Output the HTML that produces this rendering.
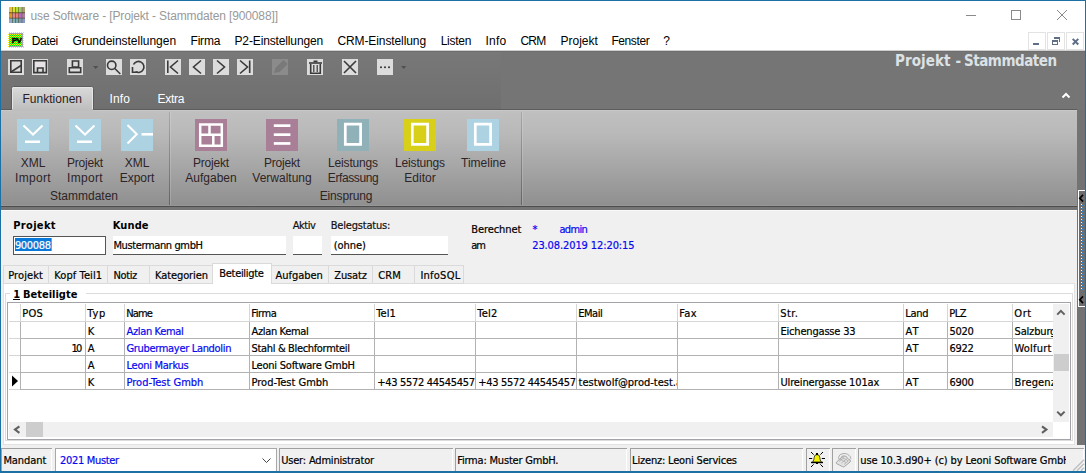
<!DOCTYPE html>
<html lang="de"><head><meta charset="utf-8"><title>use Software - [Projekt - Stammdaten [900088]]</title>
<style>
html,body{margin:0;padding:0;background:#fff;overflow:hidden}
body{width:1086px;height:473px;position:relative}
svg{display:block;position:absolute;left:0;top:0}
text{white-space:pre}
.s{font-family:"Liberation Sans",sans-serif}
.t{font-family:"DejaVu Sans Condensed","DejaVu Sans","Liberation Sans",sans-serif}
</style></head><body>
<svg width="1086" height="473" viewBox="0 0 1086 473" shape-rendering="crispEdges">
<rect x="0" y="0" width="1086" height="473" fill="#ffffff" />
<rect x="9" y="7" width="16" height="16" fill="#4a3c22" />
<rect x="9" y="7" width="3" height="5.4" fill="#e8c040" shape-rendering="auto"/>
<rect x="12.5" y="7" width="2.8" height="5.4" fill="#e0e020" shape-rendering="auto"/>
<rect x="15.8" y="7" width="2.7" height="5.4" fill="#b0e030" shape-rendering="auto"/>
<rect x="19" y="7" width="2.8" height="5.4" fill="#a0c880" shape-rendering="auto"/>
<rect x="22.2" y="7" width="2.8" height="5.4" fill="#a8a070" shape-rendering="auto"/>
<rect x="9" y="13.2" width="3" height="4.6" fill="#e09820" shape-rendering="auto"/>
<rect x="12.5" y="13.2" width="2.8" height="4.6" fill="#e08888" shape-rendering="auto"/>
<rect x="15.8" y="13.2" width="2.7" height="4.6" fill="#e88078" shape-rendering="auto"/>
<rect x="19" y="13.2" width="2.8" height="4.6" fill="#b868c8" shape-rendering="auto"/>
<rect x="22.2" y="13.2" width="2.8" height="4.6" fill="#b080a0" shape-rendering="auto"/>
<rect x="9" y="18.4" width="3" height="4.6" fill="#90a8d0" shape-rendering="auto"/>
<rect x="12.5" y="18.4" width="2.8" height="4.6" fill="#80b0b8" shape-rendering="auto"/>
<rect x="15.8" y="18.4" width="2.7" height="4.6" fill="#78a8b0" shape-rendering="auto"/>
<rect x="19" y="18.4" width="2.8" height="4.6" fill="#8098b0" shape-rendering="auto"/>
<rect x="22.2" y="18.4" width="2.8" height="4.6" fill="#8898c8" shape-rendering="auto"/>
<text class="s" x="30.5" y="19.5" font-size="12" fill="#999999" letter-spacing="-0.133">use Software - [Projekt - Stammdaten [900088]]</text>
<rect x="966" y="15" width="10" height="1" fill="#8a8a8a" />
<rect x="1011.5" y="10.5" width="9" height="9" fill="none" stroke="#8a8a8a" stroke-width="1"/>
<path d="M1057 10 L1067 20 M1067 10 L1057 20" stroke="#8a8a8a" stroke-width="1" fill="none" shape-rendering="auto"/>
<defs><pattern id="ck" x="0" y="0" width="2" height="2" patternUnits="userSpaceOnUse"><rect width="2" height="2" fill="#00f000"/><rect width="1" height="1" fill="#f4f400"/><rect x="1" y="1" width="1" height="1" fill="#f4f400"/></pattern></defs>
<rect x="8.5" y="32.5" width="15" height="15" fill="none" stroke="#f4f000" stroke-width="1" stroke-dasharray="1 1"/>
<rect x="9" y="33" width="14" height="14" fill="#a4a4ac" />
<rect x="10" y="34" width="12" height="12" fill="url(#ck)" />
<text class="s" x="11.8" y="42.8" font-size="8" fill="#000" font-weight="bold" stroke="#000" stroke-width="0.5">P</text>
<text class="s" x="16.6" y="42.8" font-size="8" fill="#000" font-weight="bold" stroke="#000" stroke-width="0.5">V</text>
<text class="s" x="31.8" y="44.5" font-size="12" fill="#000" letter-spacing="-0.429">Datei</text>
<text class="s" x="72.4" y="44.5" font-size="12" fill="#000" letter-spacing="-0.022">Grundeinstellungen</text>
<text class="s" x="190.5" y="44.5" font-size="12" fill="#000" letter-spacing="-0.193">Firma</text>
<text class="s" x="234.5" y="44.5" font-size="12" fill="#000" letter-spacing="-0.136">P2-Einstellungen</text>
<text class="s" x="337.4" y="44.5" font-size="12" fill="#000" letter-spacing="-0.095">CRM-Einstellung</text>
<text class="s" x="440.7" y="44.5" font-size="12" fill="#000" letter-spacing="-0.266">Listen</text>
<text class="s" x="485.5" y="44.5" font-size="12" fill="#000" letter-spacing="0.195">Info</text>
<text class="s" x="520.4" y="44.5" font-size="12" fill="#000" letter-spacing="-0.764">CRM</text>
<text class="s" x="560.6" y="44.5" font-size="12" fill="#000" letter-spacing="-0.027">Projekt</text>
<text class="s" x="611.4" y="44.5" font-size="12" fill="#000" letter-spacing="-0.398">Fenster</text>
<text class="s" x="663.2" y="44.5" font-size="12" fill="#000">?</text>
<rect x="1028.5" y="32.5" width="17" height="17" fill="#fff" stroke="#e3e3e3" stroke-width="1"/>
<rect x="1047.5" y="32.5" width="17" height="17" fill="#fff" stroke="#e3e3e3" stroke-width="1"/>
<rect x="1066.5" y="32.5" width="17" height="17" fill="#fff" stroke="#e3e3e3" stroke-width="1"/>
<rect x="1033" y="43" width="6" height="2" fill="#5f6f87" />
<rect x="1054" y="37" width="6" height="2" fill="#5f6f87" />
<rect x="1059" y="39" width="1" height="3" fill="#5f6f87" />
<rect x="1052" y="40" width="6" height="2" fill="#5f6f87" />
<rect x="1052" y="42" width="1" height="3" fill="#5f6f87" />
<rect x="1057" y="42" width="1" height="3" fill="#5f6f87" />
<rect x="1052" y="44" width="6" height="1" fill="#5f6f87" />
<path d="M1072.7 38.9 l5.6 5.6 M1078.3 38.9 l-5.6 5.6" stroke="#5f6f87" stroke-width="2" fill="none" shape-rendering="auto"/>
<rect x="1" y="51" width="1084" height="59" fill="#757575" />
<rect x="1" y="50" width="1084" height="1" fill="#cfcfcf" />
<defs><linearGradient id="gq" x1="0" y1="0" x2="0" y2="1"><stop offset="0" stop-color="#787878"/><stop offset="1" stop-color="#6f6f6f"/></linearGradient></defs>
<rect x="1" y="51" width="500" height="58" fill="url(#gq)" />
<rect x="1" y="51" width="1084" height="1" fill="#6e6e6e" />
<rect x="8" y="59" width="16" height="16" fill="#dcdcdc" />
<rect x="32" y="59" width="16" height="16" fill="#dcdcdc" />
<rect x="67" y="59" width="16" height="16" fill="#dcdcdc" />
<rect x="106" y="59" width="16" height="16" fill="#dcdcdc" />
<rect x="130" y="59" width="16" height="16" fill="#dcdcdc" />
<rect x="165" y="59" width="16" height="16" fill="#dcdcdc" />
<rect x="189" y="59" width="16" height="16" fill="#dcdcdc" />
<rect x="213" y="59" width="16" height="16" fill="#dcdcdc" />
<rect x="237" y="59" width="16" height="16" fill="#dcdcdc" />
<rect x="272" y="59" width="16" height="16" fill="#8b8b8b" />
<rect x="307" y="59" width="16" height="16" fill="#dcdcdc" />
<rect x="342" y="59" width="16" height="16" fill="#dcdcdc" />
<rect x="377" y="59" width="16" height="16" fill="#dcdcdc" />
<path d="M10.8 60.8 h10.4 v11.4 h-10.4 z" stroke="#3a3a3a" stroke-width="1.6" fill="none" shape-rendering="auto" />
<path d="M11 72 L21 65.5" stroke="#3a3a3a" stroke-width="1.6" fill="none" shape-rendering="auto" />
<path d="M33.8 60.8 h12.6 v11.8 h-12.6 z" stroke="#3a3a3a" stroke-width="1.6" fill="none" shape-rendering="auto" />
<rect x="35" y="62" width="10" height="5" fill="#e6e2e6" />
<path d="M37.5 73 v-5 h5.5 v5" stroke="#3a3a3a" stroke-width="1.6" fill="none" shape-rendering="auto" />
<path d="M72.4 61 h6.2 v6 h-6.2 z" stroke="#3a3a3a" stroke-width="1.6" fill="none" shape-rendering="auto" />
<path d="M69.3 67.8 h11.4 v4.6 h-11.4 z" stroke="#3a3a3a" stroke-width="1.6" fill="none" shape-rendering="auto" />
<path d="M93 66 h5.4 l-2.7 3 z" stroke="none" stroke-width="0" fill="#505050" shape-rendering="auto" />
<circle cx="111.7" cy="65.3" r="4.2" stroke="#3a3a3a" stroke-width="1.6" fill="none" shape-rendering="auto"/>
<path d="M114.8 68.5 L120.3 74" stroke="#3a3a3a" stroke-width="1.6" fill="none" shape-rendering="auto" />
<path d="M133.5 64.5 A5.5 5.5 0 1 1 135.5 71.6" stroke="#3a3a3a" stroke-width="1.6" fill="none" shape-rendering="auto" />
<path d="M132.5 67 V72.3 H138" stroke="#3a3a3a" stroke-width="1.6" fill="none" shape-rendering="auto" />
<path d="M167.8 60.5 v12.5" stroke="#3a3a3a" stroke-width="1.6" fill="none" shape-rendering="auto" />
<path d="M178 60.5 l-7.5 6.5 l7.5 6.5" stroke="#3a3a3a" stroke-width="1.6" fill="none" shape-rendering="auto" />
<path d="M201 60.5 l-7.5 6.5 l7.5 6.5" stroke="#3a3a3a" stroke-width="1.6" fill="none" shape-rendering="auto" />
<path d="M217 60.5 l7.5 6.5 l-7.5 6.5" stroke="#3a3a3a" stroke-width="1.6" fill="none" shape-rendering="auto" />
<path d="M240 60.5 l7.5 6.5 l-7.5 6.5" stroke="#3a3a3a" stroke-width="1.6" fill="none" shape-rendering="auto" />
<path d="M249.7 60.5 v12.5" stroke="#3a3a3a" stroke-width="1.6" fill="none" shape-rendering="auto" />
<path d="M274 73 l1.5 -5 l8 -8 l4 4 l-8 8 z" stroke="none" stroke-width="0" fill="#797979" shape-rendering="auto" />
<path d="M309 63 h13" stroke="#3a3a3a" stroke-width="1.6" fill="none" shape-rendering="auto" />
<path d="M313.5 61.3 h4" stroke="#3a3a3a" stroke-width="1.6" fill="none" shape-rendering="auto" />
<path d="M310.7 64 v9.3 h9.6 v-9.3" stroke="#3a3a3a" stroke-width="1.6" fill="none" shape-rendering="auto" />
<path d="M313.8 65 v7 M317.2 65 v7" stroke="#3a3a3a" stroke-width="1.2" fill="none" shape-rendering="auto" />
<path d="M344 61 l12 12 M356 61 l-12 12" stroke="#3a3a3a" stroke-width="1.6" fill="none" shape-rendering="auto" />
<circle cx="381" cy="67.2" r="1.05" fill="#3a3a3a" shape-rendering="auto"/>
<circle cx="385" cy="67.2" r="1.05" fill="#3a3a3a" shape-rendering="auto"/>
<circle cx="389" cy="67.2" r="1.05" fill="#3a3a3a" shape-rendering="auto"/>
<path d="M401 66 h5.4 l-2.7 3 z" stroke="none" stroke-width="0" fill="#505050" shape-rendering="auto" />
<text class="t" x="895.0" y="65.5" font-size="15" fill="#dce1e4" font-weight="bold" letter-spacing="0.078">Projekt</text>
<text class="t" x="955.6" y="65.5" font-size="15" fill="#dce1e4" font-weight="bold">-</text>
<text class="t" x="963.9" y="65.5" font-size="15" fill="#dce1e4" font-weight="bold" letter-spacing="-0.455">Stammdaten</text>
<path d="M1062.5 97.5 l3.5 -3.5 l3.5 3.5" stroke="#fff" stroke-width="2" fill="none" shape-rendering="auto" />
<defs><linearGradient id="gt" x1="0" y1="0" x2="0" y2="1"><stop offset="0" stop-color="#dadada"/><stop offset="1" stop-color="#bebebe"/></linearGradient><linearGradient id="gr" x1="0" y1="0" x2="0" y2="1"><stop offset="0" stop-color="#c0c0c0"/><stop offset="0.25" stop-color="#b9b9b9"/><stop offset="1" stop-color="#8f8f8f"/></linearGradient></defs>
<rect x="1" y="109" width="1076" height="1" fill="#5c5c5c" />
<rect x="1" y="110" width="1076" height="96" fill="url(#gr)" />
<rect x="1" y="110" width="1076" height="1" fill="#c8c8c8" />
<rect x="1" y="205" width="1076" height="1" fill="#979797" />
<rect x="1" y="206" width="1076" height="1" fill="#4d4d4d" />
<rect x="1" y="207" width="1076" height="3" fill="#757575" />
<path d="M11.5 110 V88.5 a2 2 0 0 1 2 -2 H91.5 a2 2 0 0 1 2 2 V110" fill="url(#gt)" stroke="#5c5c5c" stroke-width="1" shape-rendering="auto"/>
<path d="M12.5 110 V88.5 a1 1 0 0 1 1 -1 H91.5 a1 1 0 0 1 1 1 V110" fill="none" stroke="#e6e6e6" stroke-width="1" shape-rendering="auto"/>
<rect x="12" y="109" width="81" height="2" fill="#bebebe" />
<text class="s" x="22.5" y="102.5" font-size="12" fill="#2a2022" letter-spacing="0.014">Funktionen</text>
<text class="s" x="109.5" y="102.5" font-size="12" fill="#fff" letter-spacing="0.095">Info</text>
<text class="s" x="157.4" y="102.5" font-size="12" fill="#fff" letter-spacing="-0.254">Extra</text>
<defs><linearGradient id="gs" x1="0" y1="0" x2="0" y2="1"><stop offset="0" stop-color="#a8a8a8"/><stop offset="1" stop-color="#646464"/></linearGradient></defs>
<rect x="169" y="112" width="1" height="93" fill="url(#gs)" />
<rect x="170" y="112" width="1" height="93" fill="#ffffff" fill-opacity="0.16"/>
<rect x="521" y="112" width="1" height="93" fill="url(#gs)" />
<rect x="522" y="112" width="1" height="93" fill="#ffffff" fill-opacity="0.16"/>
<rect x="17" y="119" width="32" height="32" fill="#add2e2" />
<path d="M23.5 125.5 l9.5 9 l9.5 -9" stroke="#fff" stroke-width="2.1" fill="none" shape-rendering="auto" />
<rect x="25" y="140.5" width="15" height="2.5" fill="#fff" shape-rendering="auto"/>
<rect x="69" y="119" width="32" height="32" fill="#add2e2" />
<path d="M75.5 125.5 l9.5 9 l9.5 -9" stroke="#fff" stroke-width="2.1" fill="none" shape-rendering="auto" />
<rect x="77" y="140.5" width="15" height="2.5" fill="#fff" shape-rendering="auto"/>
<rect x="121" y="119" width="32" height="32" fill="#add2e2" />
<path d="M127.5 125 l9.3 9.3 l-9.3 9.3" stroke="#fff" stroke-width="2.1" fill="none" shape-rendering="auto" />
<rect x="141.5" y="133" width="11.5" height="2.6" fill="#fff" shape-rendering="auto"/>
<rect x="195" y="119" width="32" height="32" fill="#a87f97" />
<path d="M200.2 124.4 h21.6 v21.4 h-21.6 z M209.5 124.4 v10.4 M213.3 134.8 v11 M200.2 134.8 h21.6" stroke="#fff" stroke-width="2.5" fill="none" shape-rendering="auto" />
<rect x="266" y="119" width="32" height="32" fill="#a87f97" />
<rect x="273.8" y="124.3" width="16.6" height="2.7" fill="#fff" shape-rendering="auto"/>
<rect x="273.8" y="133.3" width="16.6" height="2.7" fill="#fff" shape-rendering="auto"/>
<rect x="273.8" y="142.1" width="16.6" height="2.7" fill="#fff" shape-rendering="auto"/>
<rect x="337" y="119" width="32" height="32" fill="#91b1b9" />
<path d="M345.3 124.2 h15.3 v20.2 h-15.3 z" stroke="#fff" stroke-width="2.7" fill="none" shape-rendering="auto" />
<rect x="404" y="119" width="32" height="32" fill="#d8d018" />
<path d="M412.3 124.2 h15.3 v20.2 h-15.3 z" stroke="#fff" stroke-width="2.7" fill="none" shape-rendering="auto" />
<rect x="467" y="119" width="32" height="32" fill="#add2e2" />
<path d="M475.3 124.2 h15.3 v20.2 h-15.3 z" stroke="#fff" stroke-width="2.7" fill="none" shape-rendering="auto" />
<text class="s" x="33" y="166.5" font-size="12" fill="#2e2426" text-anchor="middle">XML</text>
<text class="s" x="33" y="181.5" font-size="12" fill="#2e2426" text-anchor="middle" letter-spacing="0.297">Import</text>
<text class="s" x="85" y="166.5" font-size="12" fill="#2e2426" text-anchor="middle" letter-spacing="-0.193">Projekt</text>
<text class="s" x="85" y="181.5" font-size="12" fill="#2e2426" text-anchor="middle" letter-spacing="0.297">Import</text>
<text class="s" x="137" y="166.5" font-size="12" fill="#2e2426" text-anchor="middle">XML</text>
<text class="s" x="137" y="181.5" font-size="12" fill="#2e2426" text-anchor="middle">Export</text>
<text class="s" x="211" y="166.5" font-size="12" fill="#2e2426" text-anchor="middle" letter-spacing="-0.193">Projekt</text>
<text class="s" x="211" y="181.5" font-size="12" fill="#2e2426" text-anchor="middle">Aufgaben</text>
<text class="s" x="282" y="166.5" font-size="12" fill="#2e2426" text-anchor="middle" letter-spacing="-0.193">Projekt</text>
<text class="s" x="282" y="181.5" font-size="12" fill="#2e2426" text-anchor="middle">Verwaltung</text>
<text class="s" x="353" y="166.5" font-size="12" fill="#2e2426" text-anchor="middle" letter-spacing="-0.172">Leistungs</text>
<text class="s" x="353" y="181.5" font-size="12" fill="#2e2426" text-anchor="middle" letter-spacing="-0.404">Erfassung</text>
<text class="s" x="420" y="166.5" font-size="12" fill="#2e2426" text-anchor="middle" letter-spacing="-0.172">Leistungs</text>
<text class="s" x="420" y="181.5" font-size="12" fill="#2e2426" text-anchor="middle">Editor</text>
<text class="s" x="483.5" y="166.5" font-size="12" fill="#2e2426" text-anchor="middle">Timeline</text>
<text class="s" x="84" y="199.5" font-size="12" fill="#2e2426" text-anchor="middle">Stammdaten</text>
<text class="s" x="346" y="199.5" font-size="12" fill="#2e2426" text-anchor="middle" letter-spacing="-0.156">Einsprung</text>
<rect x="1077" y="109" width="8" height="336" fill="#737373" />
<rect x="1078" y="190" width="7" height="117" fill="#fff" />
<rect x="1079" y="191" width="6" height="115" fill="#6e6e6e" />
<path d="M1083 194.8 l-3.2 3.4 l3.2 3.4" stroke="#000" stroke-width="1.7" fill="none" shape-rendering="auto" />
<path d="M1083 296.3 l-3.2 3.4 l3.2 3.4" stroke="#000" stroke-width="1.7" fill="none" shape-rendering="auto" />
<rect x="1081" y="204" width="1" height="1" fill="#fff" />
<rect x="1082" y="205" width="1" height="1" fill="#2a8ae8" />
<rect x="1081" y="207" width="1" height="1" fill="#fff" />
<rect x="1082" y="208" width="1" height="1" fill="#2a8ae8" />
<rect x="1081" y="210" width="1" height="1" fill="#fff" />
<rect x="1082" y="211" width="1" height="1" fill="#2a8ae8" />
<rect x="1081" y="213" width="1" height="1" fill="#fff" />
<rect x="1082" y="214" width="1" height="1" fill="#2a8ae8" />
<rect x="1081" y="216" width="1" height="1" fill="#fff" />
<rect x="1082" y="217" width="1" height="1" fill="#2a8ae8" />
<rect x="1081" y="219" width="1" height="1" fill="#fff" />
<rect x="1082" y="220" width="1" height="1" fill="#2a8ae8" />
<rect x="1081" y="222" width="1" height="1" fill="#fff" />
<rect x="1082" y="223" width="1" height="1" fill="#2a8ae8" />
<rect x="1081" y="225" width="1" height="1" fill="#fff" />
<rect x="1082" y="226" width="1" height="1" fill="#2a8ae8" />
<rect x="1081" y="228" width="1" height="1" fill="#fff" />
<rect x="1082" y="229" width="1" height="1" fill="#2a8ae8" />
<rect x="1081" y="231" width="1" height="1" fill="#fff" />
<rect x="1082" y="232" width="1" height="1" fill="#2a8ae8" />
<rect x="1081" y="234" width="1" height="1" fill="#fff" />
<rect x="1082" y="235" width="1" height="1" fill="#2a8ae8" />
<rect x="1081" y="237" width="1" height="1" fill="#fff" />
<rect x="1082" y="238" width="1" height="1" fill="#2a8ae8" />
<rect x="1081" y="240" width="1" height="1" fill="#fff" />
<rect x="1082" y="241" width="1" height="1" fill="#2a8ae8" />
<rect x="1081" y="243" width="1" height="1" fill="#fff" />
<rect x="1082" y="244" width="1" height="1" fill="#2a8ae8" />
<rect x="1081" y="246" width="1" height="1" fill="#fff" />
<rect x="1082" y="247" width="1" height="1" fill="#2a8ae8" />
<rect x="1081" y="249" width="1" height="1" fill="#fff" />
<rect x="1082" y="250" width="1" height="1" fill="#2a8ae8" />
<rect x="1081" y="252" width="1" height="1" fill="#fff" />
<rect x="1082" y="253" width="1" height="1" fill="#2a8ae8" />
<rect x="1081" y="255" width="1" height="1" fill="#fff" />
<rect x="1082" y="256" width="1" height="1" fill="#2a8ae8" />
<rect x="1081" y="258" width="1" height="1" fill="#fff" />
<rect x="1082" y="259" width="1" height="1" fill="#2a8ae8" />
<rect x="1081" y="261" width="1" height="1" fill="#fff" />
<rect x="1082" y="262" width="1" height="1" fill="#2a8ae8" />
<rect x="1081" y="264" width="1" height="1" fill="#fff" />
<rect x="1082" y="265" width="1" height="1" fill="#2a8ae8" />
<rect x="1081" y="267" width="1" height="1" fill="#fff" />
<rect x="1082" y="268" width="1" height="1" fill="#2a8ae8" />
<rect x="1081" y="270" width="1" height="1" fill="#fff" />
<rect x="1082" y="271" width="1" height="1" fill="#2a8ae8" />
<rect x="1081" y="273" width="1" height="1" fill="#fff" />
<rect x="1082" y="274" width="1" height="1" fill="#2a8ae8" />
<rect x="1081" y="276" width="1" height="1" fill="#fff" />
<rect x="1082" y="277" width="1" height="1" fill="#2a8ae8" />
<rect x="1081" y="279" width="1" height="1" fill="#fff" />
<rect x="1082" y="280" width="1" height="1" fill="#2a8ae8" />
<rect x="1081" y="282" width="1" height="1" fill="#fff" />
<rect x="1082" y="283" width="1" height="1" fill="#2a8ae8" />
<rect x="1081" y="285" width="1" height="1" fill="#fff" />
<rect x="1082" y="286" width="1" height="1" fill="#2a8ae8" />
<rect x="1081" y="288" width="1" height="1" fill="#fff" />
<rect x="1082" y="289" width="1" height="1" fill="#2a8ae8" />
<rect x="1" y="210" width="1076" height="235" fill="#f0f0f0" />
<rect x="1" y="210" width="1076" height="1" fill="#f9f9f9" />
<text class="t" x="13.2" y="228.5" font-size="11" fill="#000" font-weight="bold" letter-spacing="0.340">Projekt</text>
<text class="t" x="112.7" y="228.5" font-size="11" fill="#000" font-weight="bold" letter-spacing="0.131">Kunde</text>
<text class="t" x="292.7" y="229" font-size="11" fill="#111" letter-spacing="-0.471" stroke="#111" stroke-width="0.2">Aktiv</text>
<text class="t" x="330.7" y="229" font-size="11" fill="#111" letter-spacing="-0.186" stroke="#111" stroke-width="0.2">Belegstatus:</text>
<rect x="13" y="236" width="93" height="19" fill="#555" />
<rect x="14" y="237" width="91" height="17" fill="#fff" />
<rect x="15" y="238" width="36" height="13" fill="#0a78d8" />
<rect x="51" y="238" width="1" height="13" fill="#f08020" />
<text class="t" x="14.9" y="248.5" font-size="11" fill="#fff" letter-spacing="-0.316" stroke="#fff" stroke-width="0.2">900088</text>
<rect x="113" y="236" width="173" height="18" fill="#fff" />
<rect x="113" y="254" width="173" height="1" fill="#555" />
<rect x="293" y="236" width="29" height="18" fill="#fff" />
<rect x="293" y="254" width="29" height="1" fill="#555" />
<rect x="331" y="236" width="117" height="18" fill="#fff" />
<rect x="331" y="254" width="117" height="1" fill="#555" />
<text class="t" x="113.4" y="248.5" font-size="11" fill="#000" letter-spacing="-0.376" stroke="#000" stroke-width="0.2">Mustermann gmbH</text>
<text class="t" x="333.7" y="248.5" font-size="11" fill="#000" letter-spacing="-0.044" stroke="#000" stroke-width="0.2">(ohne)</text>
<text class="t" x="471.2" y="233" font-size="11" fill="#000" letter-spacing="-0.083" stroke="#000" stroke-width="0.2">Berechnet</text>
<text class="t" x="471.2" y="248.5" font-size="11" fill="#000" letter-spacing="-1.019" stroke="#000" stroke-width="0.2">am</text>
<text class="t" x="532.5" y="233" font-size="11" fill="#0808f0" stroke="#0808f0" stroke-width="0.2">*</text>
<text class="t" x="559.4" y="233" font-size="11" fill="#0808f0" letter-spacing="-0.654" stroke="#0808f0" stroke-width="0.2">admin</text>
<text class="t" x="532.2" y="248.5" font-size="11" fill="#0808f0" letter-spacing="-0.102" stroke="#0808f0" stroke-width="0.2">23.08.2019 12:20:15</text>
<rect x="3" y="283" width="1072" height="162" fill="#e2e2e2" />
<rect x="4" y="284" width="1070" height="160" fill="#fff" />
<rect x="3" y="265" width="46" height="19" fill="#dadada" />
<rect x="4" y="266" width="44" height="17" fill="#f0f0f0" />
<text class="t" x="8.2" y="279" font-size="11" fill="#000" letter-spacing="0.098" stroke="#000" stroke-width="0.2">Projekt</text>
<rect x="48" y="265" width="60" height="19" fill="#dadada" />
<rect x="49" y="266" width="58" height="17" fill="#f0f0f0" />
<text class="t" x="54.2" y="279" font-size="11" fill="#000" letter-spacing="0.103" stroke="#000" stroke-width="0.2">Kopf Teil1</text>
<rect x="107" y="265" width="43" height="19" fill="#dadada" />
<rect x="108" y="266" width="41" height="17" fill="#f0f0f0" />
<text class="t" x="113.4" y="279" font-size="11" fill="#000" letter-spacing="-0.345" stroke="#000" stroke-width="0.2">Notiz</text>
<rect x="149" y="265" width="64" height="19" fill="#dadada" />
<rect x="150" y="266" width="62" height="17" fill="#f0f0f0" />
<text class="t" x="155.0" y="279" font-size="11" fill="#000" letter-spacing="-0.095" stroke="#000" stroke-width="0.2">Kategorien</text>
<rect x="271" y="265" width="58" height="19" fill="#dadada" />
<rect x="272" y="266" width="56" height="17" fill="#f0f0f0" />
<text class="t" x="275.5" y="279" font-size="11" fill="#000" letter-spacing="-0.033" stroke="#000" stroke-width="0.2">Aufgaben</text>
<rect x="328" y="265" width="45" height="19" fill="#dadada" />
<rect x="329" y="266" width="43" height="17" fill="#f0f0f0" />
<text class="t" x="334.3" y="279" font-size="11" fill="#000" letter-spacing="-0.129" stroke="#000" stroke-width="0.2">Zusatz</text>
<rect x="372" y="265" width="43" height="19" fill="#dadada" />
<rect x="373" y="266" width="41" height="17" fill="#f0f0f0" />
<text class="t" x="378.2" y="279" font-size="11" fill="#000" letter-spacing="0.136" stroke="#000" stroke-width="0.2">CRM</text>
<rect x="414" y="265" width="50" height="19" fill="#dadada" />
<rect x="415" y="266" width="48" height="17" fill="#f0f0f0" />
<text class="t" x="420.4" y="279" font-size="11" fill="#000" letter-spacing="0.248" stroke="#000" stroke-width="0.2">InfoSQL</text>
<rect x="212" y="263" width="60" height="21" fill="#dadada" />
<rect x="213" y="264" width="58" height="21" fill="#fff" />
<text class="t" x="219.3" y="276.7" font-size="11" fill="#000" letter-spacing="-0.307" stroke="#000" stroke-width="0.2">Beteiligte</text>
<rect x="5" y="293" width="1068" height="148" fill="#dcdcdc" />
<rect x="6" y="294" width="1066" height="146" fill="#fff" />
<rect x="10" y="290" width="76" height="8" fill="#fff" />
<text class="t" x="13.3" y="297.5" font-size="11" fill="#000" font-weight="bold">1</text>
<rect x="13" y="299" width="7" height="1" fill="#000" />
<text class="t" x="23" y="297.5" font-size="11" fill="#000" font-weight="bold">Beteiligte</text>
<rect x="7" y="302" width="1064" height="138" fill="#a3a3a8" />
<rect x="8" y="303" width="1062" height="136" fill="#fff" />
<rect x="9" y="321" width="1044" height="1" fill="#d6d6d6" />
<rect x="20" y="304" width="1" height="18" fill="#d6d6d6" />
<rect x="85" y="304" width="1" height="18" fill="#d6d6d6" />
<rect x="124" y="304" width="1" height="18" fill="#d6d6d6" />
<rect x="249" y="304" width="1" height="18" fill="#d6d6d6" />
<rect x="374" y="304" width="1" height="18" fill="#d6d6d6" />
<rect x="475" y="304" width="1" height="18" fill="#d6d6d6" />
<rect x="576" y="304" width="1" height="18" fill="#d6d6d6" />
<rect x="677" y="304" width="1" height="18" fill="#d6d6d6" />
<rect x="778" y="304" width="1" height="18" fill="#d6d6d6" />
<rect x="903" y="304" width="1" height="18" fill="#d6d6d6" />
<rect x="947" y="304" width="1" height="18" fill="#d6d6d6" />
<rect x="1012" y="304" width="1" height="18" fill="#d6d6d6" />
<text class="t" x="22.3" y="316.6" font-size="11" fill="#000" letter-spacing="0.177" stroke="#000" stroke-width="0.2">POS</text>
<text class="t" x="87.3" y="316.6" font-size="11" fill="#000" letter-spacing="0.816" stroke="#000" stroke-width="0.2">Typ</text>
<text class="t" x="126.3" y="316.6" font-size="11" fill="#000" letter-spacing="-0.868" stroke="#000" stroke-width="0.2">Name</text>
<text class="t" x="251.3" y="316.6" font-size="11" fill="#000" letter-spacing="-0.409" stroke="#000" stroke-width="0.2">Firma</text>
<text class="t" x="376.3" y="316.6" font-size="11" fill="#000" letter-spacing="0.096" stroke="#000" stroke-width="0.2">Tel1</text>
<text class="t" x="477.3" y="316.6" font-size="11" fill="#000" letter-spacing="0.262" stroke="#000" stroke-width="0.2">Tel2</text>
<text class="t" x="578.3" y="316.6" font-size="11" fill="#000" letter-spacing="-0.490" stroke="#000" stroke-width="0.2">EMail</text>
<text class="t" x="679.3" y="316.6" font-size="11" fill="#000" letter-spacing="0.345" stroke="#000" stroke-width="0.2">Fax</text>
<text class="t" x="780.3" y="316.6" font-size="11" fill="#000" letter-spacing="0.442" stroke="#000" stroke-width="0.2">Str.</text>
<text class="t" x="905.3" y="316.6" font-size="11" fill="#000" letter-spacing="-0.314" stroke="#000" stroke-width="0.2">Land</text>
<text class="t" x="949.3" y="316.6" font-size="11" fill="#000" letter-spacing="-0.483" stroke="#000" stroke-width="0.2">PLZ</text>
<text class="t" x="1014.3" y="316.6" font-size="11" fill="#000" letter-spacing="0.583" stroke="#000" stroke-width="0.2">Ort</text>
<rect x="9" y="338" width="11" height="1" fill="#d6d6d6" />
<rect x="20" y="338" width="1033" height="1" fill="#b2b2b2" />
<rect x="20" y="322" width="1" height="17" fill="#b2b2b2" />
<rect x="85" y="322" width="1" height="17" fill="#b2b2b2" />
<rect x="124" y="322" width="1" height="17" fill="#b2b2b2" />
<rect x="249" y="322" width="1" height="17" fill="#b2b2b2" />
<rect x="374" y="322" width="1" height="17" fill="#b2b2b2" />
<rect x="475" y="322" width="1" height="17" fill="#b2b2b2" />
<rect x="576" y="322" width="1" height="17" fill="#b2b2b2" />
<rect x="677" y="322" width="1" height="17" fill="#b2b2b2" />
<rect x="778" y="322" width="1" height="17" fill="#b2b2b2" />
<rect x="903" y="322" width="1" height="17" fill="#b2b2b2" />
<rect x="947" y="322" width="1" height="17" fill="#b2b2b2" />
<rect x="1012" y="322" width="1" height="17" fill="#b2b2b2" />
<rect x="9" y="355" width="11" height="1" fill="#d6d6d6" />
<rect x="20" y="355" width="1033" height="1" fill="#b2b2b2" />
<rect x="20" y="339" width="1" height="17" fill="#b2b2b2" />
<rect x="85" y="339" width="1" height="17" fill="#b2b2b2" />
<rect x="124" y="339" width="1" height="17" fill="#b2b2b2" />
<rect x="249" y="339" width="1" height="17" fill="#b2b2b2" />
<rect x="374" y="339" width="1" height="17" fill="#b2b2b2" />
<rect x="475" y="339" width="1" height="17" fill="#b2b2b2" />
<rect x="576" y="339" width="1" height="17" fill="#b2b2b2" />
<rect x="677" y="339" width="1" height="17" fill="#b2b2b2" />
<rect x="778" y="339" width="1" height="17" fill="#b2b2b2" />
<rect x="903" y="339" width="1" height="17" fill="#b2b2b2" />
<rect x="947" y="339" width="1" height="17" fill="#b2b2b2" />
<rect x="1012" y="339" width="1" height="17" fill="#b2b2b2" />
<rect x="9" y="372" width="11" height="1" fill="#d6d6d6" />
<rect x="20" y="372" width="1033" height="1" fill="#b2b2b2" />
<rect x="20" y="356" width="1" height="17" fill="#b2b2b2" />
<rect x="85" y="356" width="1" height="17" fill="#b2b2b2" />
<rect x="124" y="356" width="1" height="17" fill="#b2b2b2" />
<rect x="249" y="356" width="1" height="17" fill="#b2b2b2" />
<rect x="374" y="356" width="1" height="17" fill="#b2b2b2" />
<rect x="475" y="356" width="1" height="17" fill="#b2b2b2" />
<rect x="576" y="356" width="1" height="17" fill="#b2b2b2" />
<rect x="677" y="356" width="1" height="17" fill="#b2b2b2" />
<rect x="778" y="356" width="1" height="17" fill="#b2b2b2" />
<rect x="903" y="356" width="1" height="17" fill="#b2b2b2" />
<rect x="947" y="356" width="1" height="17" fill="#b2b2b2" />
<rect x="1012" y="356" width="1" height="17" fill="#b2b2b2" />
<rect x="9" y="389" width="11" height="1" fill="#d6d6d6" />
<rect x="20" y="389" width="1033" height="1" fill="#b2b2b2" />
<rect x="20" y="373" width="1" height="17" fill="#b2b2b2" />
<rect x="85" y="373" width="1" height="17" fill="#b2b2b2" />
<rect x="124" y="373" width="1" height="17" fill="#b2b2b2" />
<rect x="249" y="373" width="1" height="17" fill="#b2b2b2" />
<rect x="374" y="373" width="1" height="17" fill="#b2b2b2" />
<rect x="475" y="373" width="1" height="17" fill="#b2b2b2" />
<rect x="576" y="373" width="1" height="17" fill="#b2b2b2" />
<rect x="677" y="373" width="1" height="17" fill="#b2b2b2" />
<rect x="778" y="373" width="1" height="17" fill="#b2b2b2" />
<rect x="903" y="373" width="1" height="17" fill="#b2b2b2" />
<rect x="947" y="373" width="1" height="17" fill="#b2b2b2" />
<rect x="1012" y="373" width="1" height="17" fill="#b2b2b2" />
<defs><clipPath id="c0"><rect x="21" y="303" width="64" height="120"/></clipPath><clipPath id="c1"><rect x="86" y="303" width="38" height="120"/></clipPath><clipPath id="c2"><rect x="125" y="303" width="124" height="120"/></clipPath><clipPath id="c3"><rect x="250" y="303" width="124" height="120"/></clipPath><clipPath id="c4"><rect x="375" y="303" width="100" height="120"/></clipPath><clipPath id="c5"><rect x="476" y="303" width="100" height="120"/></clipPath><clipPath id="c6"><rect x="577" y="303" width="100" height="120"/></clipPath><clipPath id="c7"><rect x="678" y="303" width="100" height="120"/></clipPath><clipPath id="c8"><rect x="779" y="303" width="124" height="120"/></clipPath><clipPath id="c9"><rect x="904" y="303" width="43" height="120"/></clipPath><clipPath id="c10"><rect x="948" y="303" width="64" height="120"/></clipPath><clipPath id="c11"><rect x="1013" y="303" width="40" height="120"/></clipPath></defs>
<text class="t" x="87.8" y="334.7" font-size="11" fill="#000" clip-path="url(#c1)" stroke="#000" stroke-width="0.2">K</text>
<text class="t" x="126.5" y="334.7" font-size="11" fill="#0808f0" letter-spacing="-0.349" clip-path="url(#c2)" stroke="#0808f0" stroke-width="0.2">Azlan Kemal</text>
<text class="t" x="251.5" y="334.7" font-size="11" fill="#000" letter-spacing="-0.349" clip-path="url(#c3)" stroke="#000" stroke-width="0.2">Azlan Kemal</text>
<text class="t" x="780.5" y="334.7" font-size="11" fill="#000" letter-spacing="-0.191" clip-path="url(#c8)" stroke="#000" stroke-width="0.2">Eichengasse 33</text>
<text class="t" x="905.5" y="334.7" font-size="11" fill="#000" letter-spacing="1.131" clip-path="url(#c9)" stroke="#000" stroke-width="0.2">AT</text>
<text class="t" x="949.5" y="334.7" font-size="11" fill="#000" letter-spacing="-0.263" clip-path="url(#c10)" stroke="#000" stroke-width="0.2">5020</text>
<text class="t" x="1014.5" y="334.7" font-size="11" fill="#000" letter-spacing="-0.159" clip-path="url(#c11)" stroke="#000" stroke-width="0.2">Salzburg</text>
<text class="t" x="71.5" y="351.7" font-size="11" fill="#000" letter-spacing="-1.694" stroke="#000" stroke-width="0.2">10</text>
<text class="t" x="87.8" y="351.7" font-size="11" fill="#000" clip-path="url(#c1)" stroke="#000" stroke-width="0.2">A</text>
<text class="t" x="126.5" y="351.7" font-size="11" fill="#0808f0" letter-spacing="-0.325" clip-path="url(#c2)" stroke="#0808f0" stroke-width="0.2">Grubermayer Landolin</text>
<text class="t" x="251.5" y="351.7" font-size="11" fill="#000" letter-spacing="-0.336" clip-path="url(#c3)" stroke="#000" stroke-width="0.2">Stahl &amp; Blechformteil</text>
<text class="t" x="905.5" y="351.7" font-size="11" fill="#000" letter-spacing="1.131" clip-path="url(#c9)" stroke="#000" stroke-width="0.2">AT</text>
<text class="t" x="949.5" y="351.7" font-size="11" fill="#000" letter-spacing="-0.263" clip-path="url(#c10)" stroke="#000" stroke-width="0.2">6922</text>
<text class="t" x="1014.5" y="351.7" font-size="11" fill="#000" letter-spacing="0.191" clip-path="url(#c11)" stroke="#000" stroke-width="0.2">Wolfurt</text>
<text class="t" x="87.8" y="368.7" font-size="11" fill="#000" clip-path="url(#c1)" stroke="#000" stroke-width="0.2">A</text>
<text class="t" x="126.5" y="368.7" font-size="11" fill="#0808f0" letter-spacing="-0.266" clip-path="url(#c2)" stroke="#0808f0" stroke-width="0.2">Leoni Markus</text>
<text class="t" x="251.5" y="368.7" font-size="11" fill="#000" letter-spacing="-0.222" clip-path="url(#c3)" stroke="#000" stroke-width="0.2">Leoni Software GmbH</text>
<text class="t" x="87.8" y="385.7" font-size="11" fill="#000" clip-path="url(#c1)" stroke="#000" stroke-width="0.2">K</text>
<text class="t" x="126.5" y="385.7" font-size="11" fill="#0808f0" letter-spacing="0.007" clip-path="url(#c2)" stroke="#0808f0" stroke-width="0.2">Prod-Test Gmbh</text>
<text class="t" x="251.5" y="385.7" font-size="11" fill="#000" letter-spacing="0.007" clip-path="url(#c3)" stroke="#000" stroke-width="0.2">Prod-Test Gmbh</text>
<text class="t" x="377.3" y="385.7" font-size="11" fill="#000" letter-spacing="-0.314" clip-path="url(#c4)" stroke="#000" stroke-width="0.2">+43 5572 44545457</text>
<text class="t" x="478.3" y="385.7" font-size="11" fill="#000" letter-spacing="-0.314" clip-path="url(#c5)" stroke="#000" stroke-width="0.2">+43 5572 44545457</text>
<text class="t" x="578.5" y="385.7" font-size="11" fill="#000" letter-spacing="0.000" clip-path="url(#c6)" stroke="#000" stroke-width="0.2">testwolf@prod-test.at</text>
<text class="t" x="780.5" y="385.7" font-size="11" fill="#000" letter-spacing="-0.156" clip-path="url(#c8)" stroke="#000" stroke-width="0.2">Ulreinergasse 101ax</text>
<text class="t" x="905.5" y="385.7" font-size="11" fill="#000" letter-spacing="1.131" clip-path="url(#c9)" stroke="#000" stroke-width="0.2">AT</text>
<text class="t" x="949.5" y="385.7" font-size="11" fill="#000" letter-spacing="-0.263" clip-path="url(#c10)" stroke="#000" stroke-width="0.2">6900</text>
<text class="t" x="1014.5" y="385.7" font-size="11" fill="#000" letter-spacing="0.142" clip-path="url(#c11)" stroke="#000" stroke-width="0.2">Bregenz</text>
<path d="M12 375.5 v11 l6 -5.5 z" stroke="none" stroke-width="0" fill="#000" shape-rendering="auto" />
<rect x="1053" y="304" width="16" height="118" fill="#f0f0f0" />
<rect x="1054" y="354" width="15" height="17" fill="#cdcdcd" />
<path d="M1057.2 314.6 l3.7 -3.7 l3.7 3.7" stroke="#606060" stroke-width="2" fill="none" shape-rendering="auto" />
<path d="M1057.2 411.6 l3.7 3.7 l3.7 -3.7" stroke="#606060" stroke-width="2" fill="none" shape-rendering="auto" />
<rect x="9" y="422" width="1044" height="15" fill="#f0f0f0" />
<rect x="26" y="422" width="17" height="15" fill="#cdcdcd" />
<path d="M19.4 426.3 l-4.4 3.3 l4.4 3.3" stroke="#606060" stroke-width="2.1" fill="none" shape-rendering="auto" />
<path d="M1042 426.3 l4.4 3.3 l-4.4 3.3" stroke="#606060" stroke-width="2.1" fill="none" shape-rendering="auto" />
<rect x="1" y="445" width="1084" height="26" fill="#f0f0f0" />
<rect x="1" y="448" width="51" height="1" fill="#a0a0a0" />
<rect x="1" y="448" width="1" height="23" fill="#a0a0a0" />
<rect x="51" y="449" width="1" height="22" fill="#fff" />
<text class="t" x="3.4" y="464" font-size="11" fill="#000" letter-spacing="-0.082" stroke="#000" stroke-width="0.2">Mandant</text>
<rect x="55" y="448" width="222" height="23" fill="#a8a8a8" />
<rect x="56" y="449" width="220" height="22" fill="#fff" />
<text class="t" x="60.1" y="463.5" font-size="11" fill="#0808f0" letter-spacing="-0.323" stroke="#0808f0" stroke-width="0.2">2021 Muster</text>
<path d="M262.5 458.5 l4 4 l4 -4" stroke="#444" stroke-width="1" fill="none" shape-rendering="auto" />
<rect x="279" y="448" width="174" height="1" fill="#a0a0a0" />
<rect x="279" y="448" width="1" height="23" fill="#a0a0a0" />
<rect x="452" y="449" width="1" height="22" fill="#fff" />
<text class="t" x="281.2" y="464" font-size="11" fill="#000" letter-spacing="-0.188" stroke="#000" stroke-width="0.2">User: Administrator</text>
<rect x="455" y="448" width="172" height="1" fill="#a0a0a0" />
<rect x="455" y="448" width="1" height="23" fill="#a0a0a0" />
<rect x="626" y="449" width="1" height="22" fill="#fff" />
<text class="t" x="457.2" y="464" font-size="11" fill="#000" letter-spacing="-0.197" stroke="#000" stroke-width="0.2">Firma: Muster GmbH.</text>
<rect x="630" y="448" width="173" height="1" fill="#a0a0a0" />
<rect x="630" y="448" width="1" height="23" fill="#a0a0a0" />
<rect x="802" y="449" width="1" height="22" fill="#fff" />
<text class="t" x="632.1" y="464" font-size="11" fill="#000" letter-spacing="-0.189" stroke="#000" stroke-width="0.2">Lizenz: Leoni Services</text>
<rect x="806" y="448" width="24" height="1" fill="#a0a0a0" />
<rect x="806" y="448" width="1" height="23" fill="#a0a0a0" />
<rect x="829" y="449" width="1" height="22" fill="#fff" />
<rect x="832" y="448" width="24" height="1" fill="#a0a0a0" />
<rect x="832" y="448" width="1" height="23" fill="#a0a0a0" />
<rect x="855" y="449" width="1" height="22" fill="#fff" />
<defs><clipPath id="cs"><rect x="858" y="449" width="208" height="22"/></clipPath></defs>
<rect x="858" y="448" width="226" height="1" fill="#a0a0a0" />
<rect x="858" y="448" width="1" height="23" fill="#a0a0a0" />
<rect x="1083" y="449" width="1" height="22" fill="#fff" />
<text class="t" x="860.3" y="464" font-size="11" fill="#000" letter-spacing="-0.126" clip-path="url(#cs)" stroke="#000" stroke-width="0.2">use 10.3.d90+ (c) by Leoni Software GmbH</text>
<path d="M811 452 l2.6 2.6 M823 452 l-2.6 2.6 M811 467 l2.6 -2.6 M823 467 l-2.6 -2.6 M809 458.5 h3.2 M821.8 458.5 h3.2" stroke="#000" stroke-width="1" fill="none" shape-rendering="auto" />
<path d="M812.5 462.2 Q814.2 460 814.2 457.5 Q814.2 454.6 817 454.6 Q819.8 454.6 819.8 457.5 Q819.8 460 821.5 462.2 Z" stroke="#222" stroke-width="0.8" fill="#f2f000" shape-rendering="auto" />
<path d="M811 462.5 H823" stroke="#000" stroke-width="1.4" fill="none" shape-rendering="auto" />
<rect x="816" y="453" width="2" height="2" fill="#000" />
<rect x="816" y="463" width="2" height="1" fill="#000" />
<path d="M836.5 462 l7 -6 q1 -0.8 2 0 l4.5 4 q1 1 0 2 l-5.5 4.5 q-1.2 0.8 -2.2 0 l-5.6 -2.8 q-0.8 -0.8 -0.2 -1.7 z" stroke="#a6a6a6" stroke-width="1" fill="#e2e2e2" shape-rendering="auto" />
<path d="M839 461.5 l5 -4 M841.5 463 l5 -4 M844 464.5 l4.5 -3.8 M840 459 l6 3.5 M842.5 457.5 l5.5 3.2" stroke="#a6a6a6" stroke-width="0.7" fill="none" shape-rendering="auto" />
<path d="M838.5 457.5 q0.5 -3.5 4.5 -4 q5 -0.5 7.5 3.5 q0.8 2 -0.7 2.6 q-1.6 0.2 -2 -1.4 q-1.5 -2.6 -4.6 -2.3 q-2 0.4 -2.2 2 q-0.6 1.6 -2 1.2 q-0.8 -0.4 -0.5 -1.6 z" stroke="#a6a6a6" stroke-width="0.9" fill="#ececec" shape-rendering="auto" />
<path d="M1073 470.8 L1084 459.8" stroke="#bdbdbd" stroke-width="1.3" fill="none" shape-rendering="auto" />
<path d="M1077 470.8 L1084 463.8" stroke="#bdbdbd" stroke-width="1.3" fill="none" shape-rendering="auto" />
<path d="M1081 470.8 L1084 467.8" stroke="#bdbdbd" stroke-width="1.3" fill="none" shape-rendering="auto" />
<rect x="0" y="0" width="1086" height="1" fill="#1c70a4" />
<rect x="0" y="0" width="1" height="473" fill="#1c70a4" />
<rect x="1085" y="0" width="1" height="473" fill="#1c70a4" />
<rect x="0" y="471" width="1086" height="2" fill="#1c70a4" />
</svg>
</body></html>
